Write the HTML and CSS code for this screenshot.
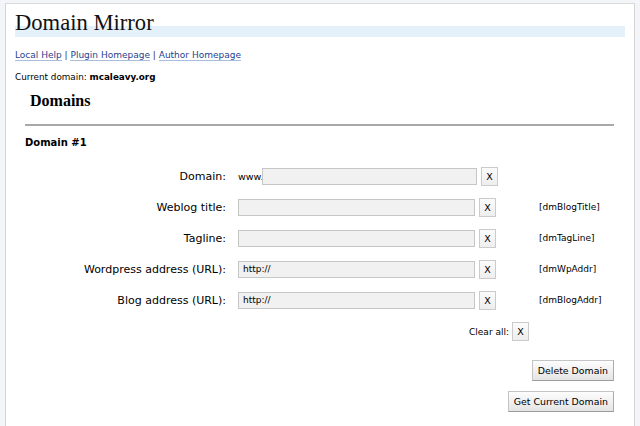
FILE: index.html
```html
<!DOCTYPE html>
<html>
<head>
<meta charset="utf-8">
<link rel="stylesheet" href="styles.css">
</head>
<body>
<div class="wrap">
  <h2 class="title">Domain Mirror</h2>
  <p class="links"><a href="#">Local Help</a> | <a href="#">Plugin Homepage</a> | <a href="#">Author Homepage</a></p>
  <p class="current">Current domain: <b>mcaleavy.org</b></p>
  <h3 class="domains">Domains</h3>
  <div class="section">
    <h4 class="dtitle">Domain #1</h4>
    <div class="form">
      <div class="row">
        <label class="lbl">Domain:</label>
        <div class="field wide"><span class="pre">www.</span><span class="input"></span></div>
        <span class="xbtn">X</span>
      </div>
      <div class="row">
        <label class="lbl">Weblog title:</label>
        <div class="field"><span class="input"></span></div>
        <span class="xbtn">X</span>
        <span class="tag">[dmBlogTitle]</span>
      </div>
      <div class="row">
        <label class="lbl">Tagline:</label>
        <div class="field"><span class="input"></span></div>
        <span class="xbtn">X</span>
        <span class="tag">[dmTagLine]</span>
      </div>
      <div class="row">
        <label class="lbl">Wordpress address (URL):</label>
        <div class="field"><span class="input">http://</span></div>
        <span class="xbtn">X</span>
        <span class="tag">[dmWpAddr]</span>
      </div>
      <div class="row">
        <label class="lbl">Blog address (URL):</label>
        <div class="field"><span class="input">http://</span></div>
        <span class="xbtn">X</span>
        <span class="tag">[dmBlogAddr]</span>
      </div>
    </div>
    <div class="clear"><span>Clear all:</span><span class="xbtn">X</span></div>
    <div class="actions">
      <span class="btn">Delete Domain</span>
      <span class="btn">Get Current Domain</span>
    </div>
  </div>
</div>
</body>
</html>
```
FILE: styles.css
```css
html, body { margin: 0; padding: 0; }
body {
  background: #f3f5f8;
  font-family: "DejaVu Sans", Verdana, sans-serif;
  font-size: 9px;
  color: #000;
  height: 426px;
  overflow: hidden;
}
.wrap {
  margin: 3px 0 0 5px;
  width: 630px;
  height: 430px;
  background: #fff;
  border-top: 1px solid #dadada;
  border-left: 1px solid #d4d4d4;
  border-right: 1px solid #d4d4d4;
  padding: 0 0 0 9px;
  box-sizing: border-box;
}
.title {
  margin: 0;
  padding-top: 5px;
  font-family: "Liberation Serif", "Times New Roman", serif;
  font-weight: normal;
  font-size: 22.6px;
  line-height: 28px;
  height: 28px;
  width: 610px;
  color: #111;
  background: linear-gradient(#fff 0, #fff 22px, #e4f1fb 22px, #e4f1fb 33px);
}
.links { margin: 11px 0 0; line-height: 14px; font-size: 9px; color: #333; }
.links a { color: #1f3f8f; text-decoration: none; border-bottom: 1px solid #a9bedc; }
.current { margin: 8px 0 0; line-height: 14px; font-size: 8.8px; }
.domains {
  margin: 7px 0 0 15px;
  font-family: "Liberation Serif", "Times New Roman", serif;
  font-size: 16px;
  line-height: 20px;
}
.section {
  margin: 13px 0 0 10px;
  width: 589px;
  border-top: 2px solid #a8a8a8;
}
.dtitle { margin: 10px 0 0; font-size: 10px; line-height: 14px; }
.form { margin-top: 17px; display: flex; flex-direction: column; gap: 13px; }
.row { display: flex; align-items: center; height: 18px; }
.lbl { width: 201px; text-align: right; font-size: 11px; padding-right: 12px; box-sizing: content-box; }
.field { width: 237px; display: flex; align-items: center; }
.field.wide { width: 239px; }
.pre { font-size: 9.5px; width: 24px; }
.input {
  flex: 1;
  height: 17px;
  box-sizing: border-box;
  background: #f1f1f1;
  border: 1px solid #c6c6c6;
  font-size: 9px;
  line-height: 15px;
  padding-left: 4px;
}
.xbtn {
  width: 17px; height: 19px;
  box-sizing: border-box;
  margin-left: 4px;
  border: 1px solid #cbcbcb;
  background: linear-gradient(#fbfbfb, #eeeeee);
  font-size: 9.5px;
  line-height: 17px;
  text-align: center;
}
.tag { margin-left: 43px; font-size: 9px; }
.clear { display: flex; justify-content: flex-end; align-items: center; margin: 13px 85px 0 0; font-size: 9px; }
.clear .xbtn { margin-left: 3px; }
.actions { display: flex; flex-direction: column; align-items: flex-end; gap: 10px; margin: 19px 0 0 0; }
.btn {
  display: block;
  height: 21px;
  box-sizing: border-box;
  padding: 0 5px;
  border: 1px solid #c4c4c4;
  border-bottom-color: #9c9c9c;
  border-right-color: #acacac;
  background: linear-gradient(#fdfdfd, #e4e4e4);
  font-size: 9.4px;
  line-height: 19px;
}
```
